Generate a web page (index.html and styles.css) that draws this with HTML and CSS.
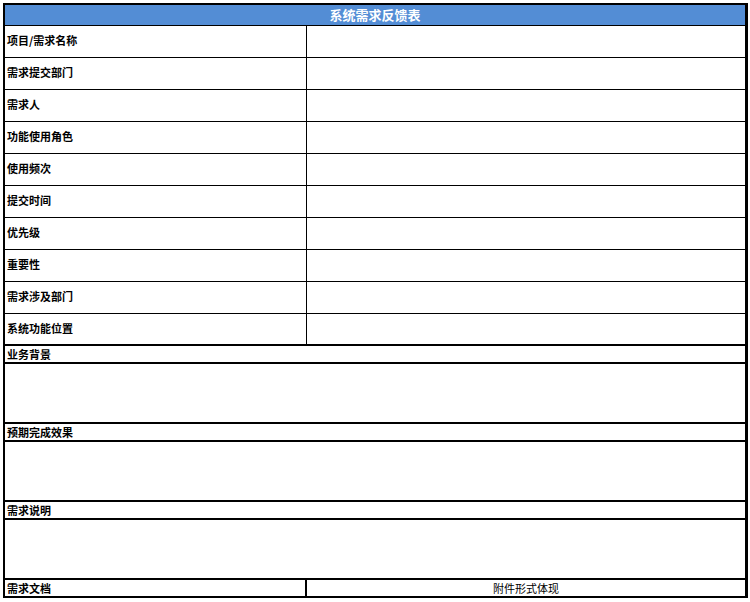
FILE: index.html
```html
<!DOCTYPE html>
<html lang="zh-CN">
<head>
    <meta charset="UTF-8">
    <title>系统需求反馈表</title>
    <link rel="stylesheet" href="styles.css">
</head>
<body>
    <div class="sheet">
        <div class="title">系统需求反馈表</div>

        <div class="row">
            <div class="label">项目/需求名称</div>
            <div class="value"></div>
        </div>
        <div class="row">
            <div class="label">需求提交部门</div>
            <div class="value"></div>
        </div>
        <div class="row">
            <div class="label">需求人</div>
            <div class="value"></div>
        </div>
        <div class="row">
            <div class="label">功能使用角色</div>
            <div class="value"></div>
        </div>
        <div class="row">
            <div class="label">使用频次</div>
            <div class="value"></div>
        </div>
        <div class="row">
            <div class="label">提交时间</div>
            <div class="value"></div>
        </div>
        <div class="row">
            <div class="label">优先级</div>
            <div class="value"></div>
        </div>
        <div class="row">
            <div class="label">重要性</div>
            <div class="value"></div>
        </div>
        <div class="row">
            <div class="label">需求涉及部门</div>
            <div class="value"></div>
        </div>
        <div class="row row-last">
            <div class="label">系统功能位置</div>
            <div class="value"></div>
        </div>

        <div class="section-head">业务背景</div>
        <div class="section-body"></div>

        <div class="section-head">预期完成效果</div>
        <div class="section-body"></div>

        <div class="section-head">需求说明</div>
        <div class="section-body"></div>

        <div class="row row-foot">
            <div class="label">需求文档</div>
            <div class="value note">附件形式体现</div>
        </div>
    </div>
</body>
</html>
```

FILE: styles.css
```css
body {
    margin: 0;
    padding: 3px 0 0 3px;
    background: #fff;
    font-family: "Noto Sans CJK SC", "Liberation Sans", sans-serif;
    font-size: 11px;
    color: #000;
}

.sheet {
    width: 740px;
    border-top: 2px solid #000;
    border-left: 2px solid #000;
    border-right: 3px solid #000;
    border-bottom: 2px solid #000;
}

.title {
    height: 20px;
    line-height: 19px;
    background-color: #538dd5;
    color: #fff;
    font-size: 13px;
    font-weight: bold;
    text-align: center;
    border-bottom: 1px solid #000;
}

.row {
    display: flex;
    height: 31px;
    border-bottom: 1px solid #000;
}

.row-last {
    height: 30px;
    border-bottom: 2px solid #000;
}

.row-foot {
    height: 16px;
    border-bottom: none;
}

.label {
    width: 299px;
    padding: 0 0 3px 2px;
    border-right: 1px solid #000;
    display: flex;
    align-items: center;
    font-weight: bold;
}

.row-foot .label {
    border-right-width: 2px;
    width: 298px;
    padding-bottom: 0;
}

.value {
    flex: 1;
}

.note {
    display: flex;
    align-items: center;
    justify-content: center;
}

.section-head {
    height: 16px;
    padding-left: 2px;
    display: flex;
    align-items: center;
    font-weight: bold;
    border-bottom: 2px solid #000;
}

.section-body {
    height: 58px;
    border-bottom: 2px solid #000;
}
```
